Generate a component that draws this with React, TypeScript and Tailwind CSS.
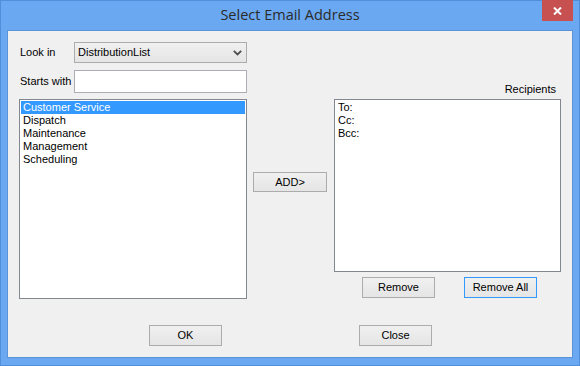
import React from 'react';

const font = { fontFamily: '"Liberation Sans", Arial, sans-serif' };

const WinButton: React.FC<{ label: string; focused?: boolean; className?: string }> = ({ label, focused, className }) => (
  <button
    className={`h-[21px] w-[73px] border bg-gradient-to-b from-[#f0f0f0] to-[#e5e5e5] text-[11px] leading-none text-black ${
      focused ? 'border-[#3399ff]' : 'border-[#acacac]'
    } ${className ?? ''}`}
  >
    {label}
  </button>
);

const groups = ['Customer Service', 'Dispatch', 'Maintenance', 'Management', 'Scheduling'];

export default function App() {
  return (
    <div
      className="flex h-[366px] w-[580px] flex-col border border-[#4f8fdc] bg-[#6aa8f2]"
      style={font}
    >
      {/* title bar */}
      <div className="relative flex h-[29px] shrink-0 items-center justify-center">
        <span className="pb-[1px] text-[14.5px] text-[#2b2b2b]" style={{ fontFamily: '"Open Sans", "Noto Sans", sans-serif' }}>
          Select Email Address
        </span>
        <div className="absolute right-[6px] top-[-1px] flex h-[21px] w-[31px] items-center justify-center bg-[#c75050]">
          <svg width="9" height="8" viewBox="0 0 9 8">
            <path d="M1 0.5 L8 7.5 M8 0.5 L1 7.5" stroke="#fff" strokeWidth="2" />
          </svg>
        </div>
      </div>

      {/* client area */}
      <div className="mx-[6px] mb-[7px] flex flex-1 flex-col border border-[#5b93d8] bg-[#f0f0f0] pl-[11px] pt-[11px] text-[11px] text-black">
        <div className="flex">
          {/* left column */}
          <div className="flex w-[228px] flex-col">
            <div className="flex h-[21px] items-center">
              <span className="w-[55px] pl-[1px]">Look in</span>
              <div className="flex h-[21px] w-[173px] items-center justify-between border border-[#acacac] bg-gradient-to-b from-[#f0f0f0] to-[#e5e5e5] pl-[3px] pr-[4px]">
                <span>DistributionList</span>
                <svg width="9" height="6" viewBox="0 0 9 6">
                  <path d="M0.8 0.8 L4.5 4.5 L8.2 0.8" stroke="#4d4d4d" strokeWidth="1.8" fill="none" />
                </svg>
              </div>
            </div>
            <div className="mt-[7px] flex h-[23px] items-center">
              <span className="w-[55px] pl-[1px]">Starts with</span>
              <div className="h-[23px] w-[173px] border border-[#abadb3] bg-white" />
            </div>
            <div className="mt-[6px] h-[200px] w-[228px] border border-[#828790] bg-white p-[1px] leading-[13px]">
              {groups.map((g, i) => (
                <div key={g} className={`h-[13px] pl-[2px] ${i === 0 ? 'bg-[#3399ff] text-white' : ''}`}>
                  {g}
                </div>
              ))}
            </div>
          </div>

          {/* middle column */}
          <div className="ml-[6px] w-[74px] pt-[130px]">
            <button className="h-[20px] w-[74px] border border-[#acacac] bg-gradient-to-b from-[#f0f0f0] to-[#e5e5e5] text-[11px] leading-none">
              ADD&gt;
            </button>
          </div>

          {/* right column */}
          <div className="ml-[7px] flex w-[227px] flex-col">
            <div className="flex h-[57px] items-end justify-end pb-[2px] pr-[5px]">Recipients</div>
            <div className="h-[173px] border border-[#828790] bg-white px-[3px] pt-[1px] leading-[13px]">
              <div>To:</div>
              <div>Cc:</div>
              <div>Bcc:</div>
            </div>
            <div className="mt-[5px] flex pl-[28px]">
              <WinButton label="Remove" className="h-[20px]" />
              <WinButton label="Remove All" focused className="ml-[29px] h-[20px]" />
            </div>
          </div>
        </div>

        {/* bottom buttons */}
        <div className="mt-[26px] flex pl-[130px]">
          <WinButton label="OK" />
          <WinButton label="Close" className="ml-[137px]" />
        </div>
      </div>
    </div>
  );
}
